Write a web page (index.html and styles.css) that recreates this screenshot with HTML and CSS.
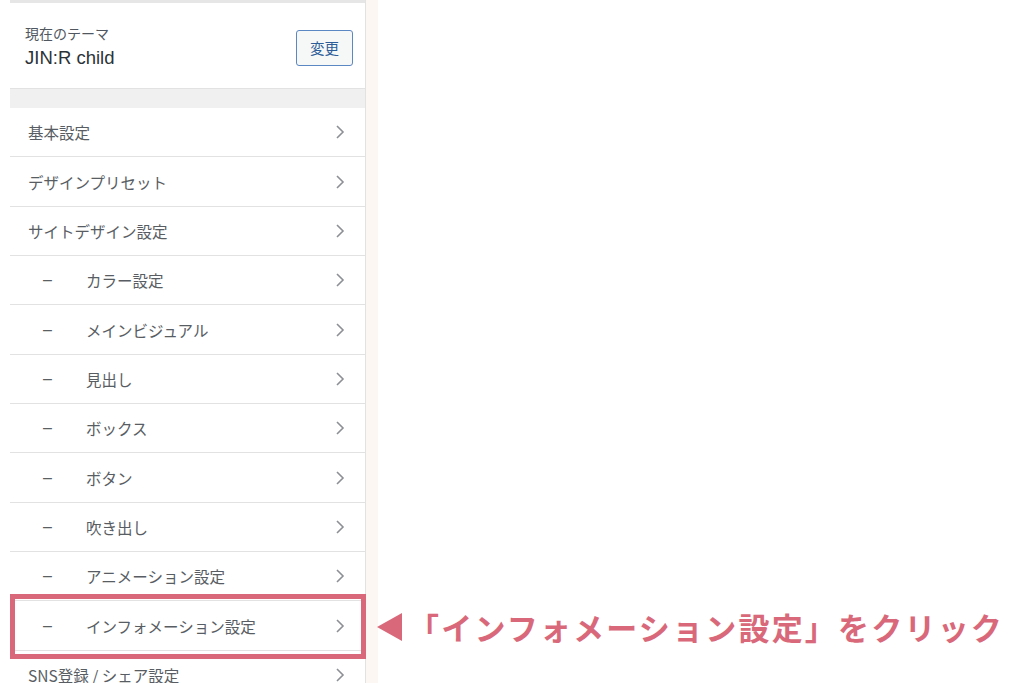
FILE: index.html
```html
<!DOCTYPE html>
<html lang="ja">
<head>
<meta charset="utf-8">
<link rel="stylesheet" href="styles.css">
</head>
<body>
<div class="page">
  <div class="panel">
    <div class="topline"></div>
    <div class="theme">
      <div class="theme-info">
        <div class="theme-label">現在のテーマ</div>
        <div class="theme-name">JIN:R child</div>
      </div>
      <button class="change-btn">変更</button>
    </div>
    <div class="spacer"></div>
    <ul class="menu">
      <li class="item"><span class="label">基本設定</span><svg class="chev" viewBox="0 0 10 16"><polyline points="2,2 8,8 2,14"/></svg></li>
      <li class="item"><span class="label">デザインプリセット</span><svg class="chev" viewBox="0 0 10 16"><polyline points="2,2 8,8 2,14"/></svg></li>
      <li class="item"><span class="label">サイトデザイン設定</span><svg class="chev" viewBox="0 0 10 16"><polyline points="2,2 8,8 2,14"/></svg></li>
      <li class="item sub"><span class="dash">–</span><span class="label">カラー設定</span><svg class="chev" viewBox="0 0 10 16"><polyline points="2,2 8,8 2,14"/></svg></li>
      <li class="item sub"><span class="dash">–</span><span class="label">メインビジュアル</span><svg class="chev" viewBox="0 0 10 16"><polyline points="2,2 8,8 2,14"/></svg></li>
      <li class="item sub"><span class="dash">–</span><span class="label">見出し</span><svg class="chev" viewBox="0 0 10 16"><polyline points="2,2 8,8 2,14"/></svg></li>
      <li class="item sub"><span class="dash">–</span><span class="label">ボックス</span><svg class="chev" viewBox="0 0 10 16"><polyline points="2,2 8,8 2,14"/></svg></li>
      <li class="item sub"><span class="dash">–</span><span class="label">ボタン</span><svg class="chev" viewBox="0 0 10 16"><polyline points="2,2 8,8 2,14"/></svg></li>
      <li class="item sub"><span class="dash">–</span><span class="label">吹き出し</span><svg class="chev" viewBox="0 0 10 16"><polyline points="2,2 8,8 2,14"/></svg></li>
      <li class="item sub"><span class="dash">–</span><span class="label">アニメーション設定</span><svg class="chev" viewBox="0 0 10 16"><polyline points="2,2 8,8 2,14"/></svg></li>
      <li class="item sub highlight"><span class="dash">–</span><span class="label">インフォメーション設定</span><svg class="chev" viewBox="0 0 10 16"><polyline points="2,2 8,8 2,14"/></svg>
        <div class="hl-box"></div>
        <div class="callout"><span class="tri"></span><span class="callout-text">「インフォメーション設定」をクリック</span></div>
      </li>
      <li class="item"><span class="label">SNS登録 / シェア設定</span><svg class="chev" viewBox="0 0 10 16"><polyline points="2,2 8,8 2,14"/></svg></li>
    </ul>
  </div>
  <div class="strip"></div>
  <div class="rest"></div>
</div>
</body>
</html>
```
FILE: styles.css
```css
html, body {
  margin: 0;
  padding: 0;
  background: #ffffff;
  height: 683px;
  overflow: hidden;
}
body {
  font-family: "Noto Sans CJK JP", "Noto Sans", sans-serif;
  color: #50575e;
}
.page {
  display: flex;
  height: 683px;
  padding-left: 10px;
}
.panel {
  width: 355px;
  flex: none;
  background: #fff;
  border-right: 1px solid #e2e2e2;
}
.strip {
  width: 12px;
  flex: none;
  background: #fdf7f3;
}
.rest {
  flex: 1;
  background: #fff;
}
.topline {
  height: 3px;
  background: #e6e6e6;
}
.theme {
  height: 86px;
  box-sizing: border-box;
  border-bottom: 1px solid #e2e2e2;
  display: flex;
  align-items: center;
  justify-content: space-between;
  padding: 2px 12px 0 15px;
}
.theme-label {
  font-size: 14px;
  color: #50575e;
  line-height: 20px;
}
.theme-name {
  font-family: "Liberation Sans", Arial, sans-serif;
  font-size: 18.5px;
  color: #2c3338;
  line-height: 26px;
  margin-top: 2px;
}
.change-btn {
  width: 57px;
  height: 36px;
  border: 1px solid #5b87c2;
  border-radius: 3px;
  background: #f6f7f7;
  color: #2e5e99;
  font-family: "Noto Sans CJK JP", sans-serif;
  font-size: 14.5px;
  padding: 0;
  margin-top: 2px;
}
.spacer {
  height: 19px;
  background: #f0f0f0;
}
.menu {
  list-style: none;
  margin: 0;
  padding: 0;
}
.item {
  position: relative;
  height: 48.35px;
  border-bottom: 1px solid #e2e2e2;
  display: flex;
  align-items: center;
  padding: 0 20px 0 18px;
  font-size: 15.5px;
  color: #585d63;
}
.item .label {
  flex: 1;
}
.item .dash {
  width: 58px;
  padding-left: 15px;
  box-sizing: border-box;
  color: #5a5f64;
  font-family: "Liberation Sans", sans-serif;
  font-size: 16px;
  font-weight: normal;
}
.chev {
  width: 10px;
  height: 16px;
}
.chev polyline {
  fill: none;
  stroke: #8c8f94;
  stroke-width: 1.6;
}
.hl-box {
  position: absolute;
  left: 0;
  top: -7px;
  width: 356px;
  height: 65px;
  box-sizing: border-box;
  border: 5px solid #d9697a;
}
.callout {
  position: absolute;
  left: 367px;
  top: 8px;
  display: flex;
  align-items: center;
  white-space: nowrap;
}
.tri {
  width: 0;
  height: 0;
  border-top: 14px solid transparent;
  border-bottom: 14px solid transparent;
  border-right: 25px solid #d9697a;
}
.callout-text {
  margin-left: 6px;
  font-size: 31px;
  font-weight: bold;
  letter-spacing: 2.2px;
  color: #d9697a;
  line-height: 36px;
}
```
